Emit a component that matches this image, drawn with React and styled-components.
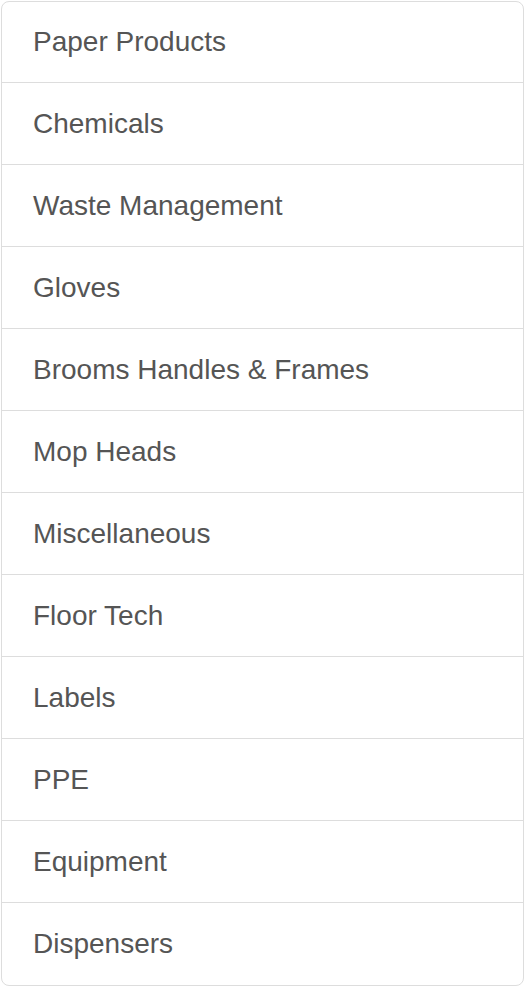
import styled, { createGlobalStyle } from "styled-components";

const categories = [
  "Paper Products",
  "Chemicals",
  "Waste Management",
  "Gloves",
  "Brooms Handles & Frames",
  "Mop Heads",
  "Miscellaneous",
  "Floor Tech",
  "Labels",
  "PPE",
  "Equipment",
  "Dispensers",
];

const GlobalStyle = createGlobalStyle`
  body {
    margin: 0;
    background: #fff;
    font-family: "Liberation Sans", Arial, Helvetica, sans-serif;
  }
`;

const Page = styled.div`
  padding: 1px 2px 2px 1px;
`;

const List = styled.ul`
  list-style: none;
  margin: 0;
  padding: 0;
  border: 1px solid #dddddd;
  border-radius: 8px;
  overflow: hidden;
  background: #fff;
`;

const Item = styled.li`
  padding: 21px 31px 20px;
  font-size: 28px;
  line-height: 40px;
  color: #555555;
  border-top: 1px solid #dddddd;

  &:first-child {
    border-top: none;
    padding-top: 20px;
  }

  &:last-child {
    padding-bottom: 21px;
  }
`;

const App = () => {
  return (
    <Page>
      <GlobalStyle />
      <List>
        {categories.map((name) => (
          <Item key={name}>{name}</Item>
        ))}
      </List>
    </Page>
  );
};

export default App;
